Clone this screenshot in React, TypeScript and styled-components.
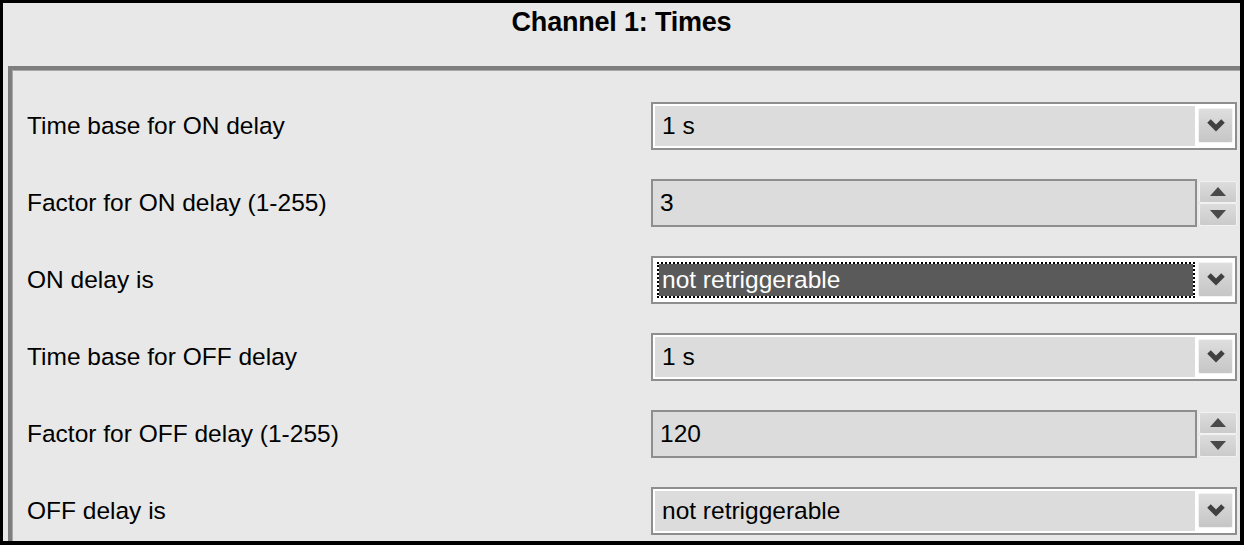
import React from "react";
import styled, { createGlobalStyle } from "styled-components";

const GlobalStyle = createGlobalStyle`
  html, body {
    margin: 0;
    padding: 0;
    background: #ffffff;
  }
  body {
    font-family: "Liberation Sans", Arial, sans-serif;
    color: #000;
  }
`;

const Frame = styled.div`
  width: 1244px;
  height: 545px;
  box-sizing: border-box;
  border-style: solid;
  border-color: #000;
  border-width: 3px 4px 4px 3px;
  background: #e8e8e8;
  overflow: hidden;
  display: flex;
  flex-direction: column;
`;

const Header = styled.div`
  height: 63px;
  flex: none;
  display: flex;
  justify-content: center;
  padding-top: 4px;
  box-sizing: border-box;
`;

const Title = styled.div`
  font-size: 27px;
  line-height: 31px;
  font-weight: bold;
  letter-spacing: -0.2px;
`;

const Group = styled.div`
  flex: 1;
  margin-left: 5px;
  border-top: 4px solid #7e7e7e;
  border-left: 4px solid #7e7e7e;
  box-shadow: inset 1px 1px 0 #a9a9a9;
  padding: 17px 3px 0 15px;
  display: flex;
  flex-direction: column;
`;

const Row = styled.div`
  height: 77px;
  flex: none;
  display: grid;
  grid-template-columns: 1fr 586px;
  align-items: center;
`;

const Label = styled.div`
  font-size: 24.5px;
  line-height: 28px;
  white-space: nowrap;
`;

const ComboBox = styled.div`
  height: 48px;
  box-sizing: border-box;
  border: 2px solid #8e8e8e;
  background: #ffffff;
  padding: 2px;
  display: flex;
  gap: 3px;
`;

const ComboField = styled.div<{ $focused?: boolean }>`
  flex: 1;
  display: flex;
  align-items: center;
  box-sizing: border-box;
  font-size: 24.5px;
  white-space: nowrap;
  background: ${(p) => (p.$focused ? "#5a5a5a" : "#dcdcdc")};
  color: ${(p) => (p.$focused ? "#ffffff" : "#000000")};
  padding-left: ${(p) => (p.$focused ? "3px" : "7px")};
  margin: ${(p) => (p.$focused ? "2px 0 2px 2px" : "0")};
  border: ${(p) => (p.$focused ? "2px dotted #000" : "none")};
  background-clip: padding-box;
`;

const DropButton = styled.div`
  width: 35px;
  margin: 2px 0 3px;
  box-sizing: border-box;
  border: 1px solid #f2f2f2;
  border-radius: 2px;
  background: linear-gradient(#dedede, #cfcfcf 60%, #c6c6c6);
  display: flex;
  align-items: center;
  justify-content: center;
`;

const SpinBox = styled.div`
  height: 48px;
  display: flex;
  gap: 2px;
`;

const SpinField = styled.div`
  flex: 1;
  box-sizing: border-box;
  border: 2px solid #8e8e8e;
  background: #dcdcdc;
  display: flex;
  align-items: center;
  padding-left: 7px;
  font-size: 24.5px;
`;

const SpinButtons = styled.div`
  width: 38px;
  display: flex;
  flex-direction: column;
  padding: 2px 0 1px;
  box-sizing: border-box;
`;

const SpinButton = styled.div`
  flex: 1;
  box-sizing: border-box;
  border: 1px solid #f2f2f2;
  border-radius: 2px;
  background: linear-gradient(#dcdcdc, #cbcbcb);
  display: flex;
  align-items: center;
  justify-content: center;
`;

const Chevron = () => (
  <svg width="20" height="15" viewBox="0 0 20 15">
    <polyline
      points="3,3 10,10 17,3"
      fill="none"
      stroke="#404040"
      strokeWidth="5"
      strokeLinejoin="miter"
    />
  </svg>
);

const Arrow = ({ up }: { up?: boolean }) => (
  <svg width="16" height="9" viewBox="0 0 16 9">
    <polygon points={up ? "8,0 16,9 0,9" : "0,0 16,0 8,9"} fill="#4a4a4a" />
  </svg>
);

type Param =
  | { label: string; kind: "combo"; value: string; focused?: boolean }
  | { label: string; kind: "spin"; value: string };

const params: Param[] = [
  { label: "Time base for ON delay", kind: "combo", value: "1 s" },
  { label: "Factor for ON delay (1-255)", kind: "spin", value: "3" },
  { label: "ON delay is", kind: "combo", value: "not retriggerable", focused: true },
  { label: "Time base for OFF delay", kind: "combo", value: "1 s" },
  { label: "Factor for OFF delay (1-255)", kind: "spin", value: "120" },
  { label: "OFF delay is", kind: "combo", value: "not retriggerable" },
];

export default function App() {
  return (
    <>
      <GlobalStyle />
      <Frame>
        <Header>
          <Title>Channel 1: Times</Title>
        </Header>
        <Group>
          {params.map((p) => (
            <Row key={p.label}>
              <Label>{p.label}</Label>
              {p.kind === "combo" ? (
                <ComboBox>
                  <ComboField $focused={p.focused}>{p.value}</ComboField>
                  <DropButton>
                    <Chevron />
                  </DropButton>
                </ComboBox>
              ) : (
                <SpinBox>
                  <SpinField>{p.value}</SpinField>
                  <SpinButtons>
                    <SpinButton>
                      <Arrow up />
                    </SpinButton>
                    <SpinButton>
                      <Arrow />
                    </SpinButton>
                  </SpinButtons>
                </SpinBox>
              )}
            </Row>
          ))}
        </Group>
      </Frame>
    </>
  );
}
